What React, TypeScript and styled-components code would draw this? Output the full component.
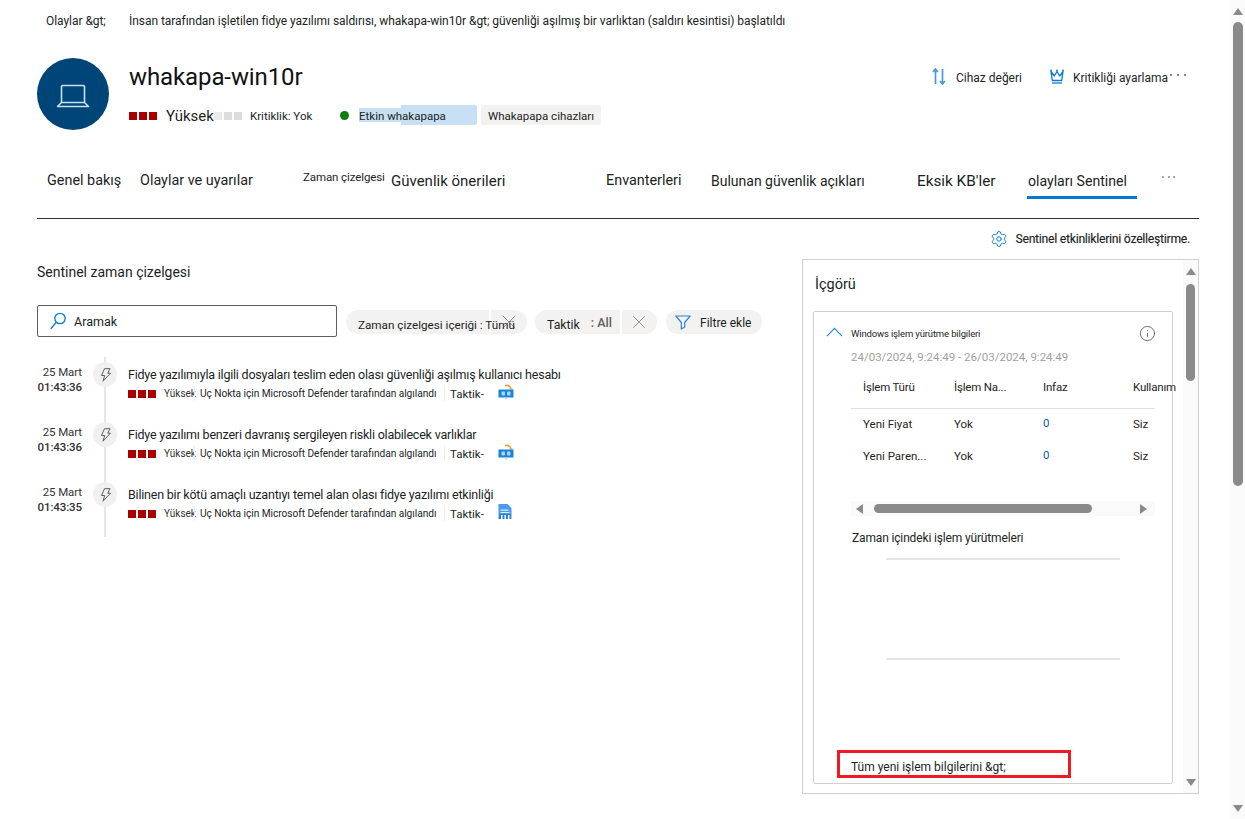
import React from "react";
import styled, { createGlobalStyle } from "styled-components";
import { Settings, X, Info } from "lucide-react";

const Global = createGlobalStyle`
  html, body { margin: 0; padding: 0; background: #fff; }
  * { box-sizing: border-box; }
  body { font-family: Roboto, "Liberation Sans", sans-serif; color: #201f1e; }
`;

const Page = styled.div`
  display: flex;
  width: 1245px;
  height: 819px;
  overflow: hidden;
  background: #fff;
`;
const Main = styled.main`
  width: 1230px;
  padding: 0 31px 0 37px;
  display: flex;
  flex-direction: column;
`;
const PageScroll = styled.div`
  width: 15px;
  background: #fafafa;
  display: flex;
  flex-direction: column;
  align-items: center;
  padding: 8px 0 7px 1px;
`;
const Arrow = styled.span<{ $dir: "up" | "down" | "left" | "right" }>`
  width: 0;
  height: 0;
  flex: none;
  ${(p) =>
    p.$dir === "up"
      ? "border-left:5px solid transparent;border-right:5px solid transparent;border-bottom:7px solid #8a8a8a;"
      : p.$dir === "down"
      ? "border-left:5px solid transparent;border-right:5px solid transparent;border-top:7px solid #8a8a8a;"
      : p.$dir === "left"
      ? "border-top:5px solid transparent;border-bottom:5px solid transparent;border-right:7px solid #8a8a8a;"
      : "border-top:5px solid transparent;border-bottom:5px solid transparent;border-left:7px solid #8a8a8a;"}
`;
const PageThumb = styled.div`
  width: 10px;
  height: 464px;
  margin-top: 7px;
  border-radius: 5px;
  background: #8a8a8a;
`;
const Spacer = styled.div`
  flex: 1;
`;

const Breadcrumb = styled.nav`
  height: 42px;
  display: flex;
  align-items: center;
  padding-left: 9px;
  font-size: 12px;
  letter-spacing: -0.05px;
`;
const Crumb = styled.span<{ $w?: number }>`
  width: ${(p) => (p.$w ? `${p.$w}px` : "auto")};
  white-space: nowrap;
`;

const Header = styled.header`
  margin-top: 16px;
  height: 72px;
  display: flex;
  gap: 20px;
`;
const Avatar = styled.div`
  width: 72px;
  height: 72px;
  padding-top: 3px;
  border-radius: 50%;
  background: #004578;
  display: flex;
  align-items: center;
  justify-content: center;
  flex: none;
`;
const HeaderInfo = styled.div`
  flex: 1;
  display: flex;
  flex-direction: column;
`;
const Title = styled.h1`
  margin: 4px 0 0;
  font-size: 24px;
  line-height: 30px;
  font-weight: 400;
  letter-spacing: -0.1px;
  color: #111;
`;
const MetaRow = styled.div`
  margin-top: 13px;
  height: 20px;
  display: flex;
  align-items: center;
`;
const Squares = styled.span<{ $down?: number }>`
  display: inline-flex;
  gap: 2px;
  flex: none;
  margin-top: ${(p) => p.$down ?? 0}px;
`;
const Square = styled.i<{ $c: string }>`
  display: block;
  width: 8px;
  height: 8px;
  background: ${(p) => p.$c};
`;
const Severity = styled.span`
  margin-left: 9px;
  padding-top: 2px;
  width: 48px;
  font-size: 15px;
  white-space: nowrap;
`;
const Critical = styled.span`
  margin-left: 8px;
  padding-top: 1px;
  width: 90px;
  font-size: 11.5px;
  white-space: nowrap;
`;
const Dot = styled.i`
  width: 9px;
  height: 9px;
  border-radius: 50%;
  background: #107c10;
  flex: none;
`;
const ActiveTag = styled.span`
  margin-left: 10px;
  padding-top: 1px;
  width: 118px;
  height: 20px;
  display: flex;
  align-items: center;
  font-size: 11.5px;
  white-space: nowrap;
  background: linear-gradient(#c7e0f4, #c7e0f4) right / 76px 20px no-repeat,
    linear-gradient(#c7e0f4, #c7e0f4) left center / 42px 14px no-repeat;
  border-radius: 2px;
`;
const DeviceTag = styled.span`
  margin-left: 4px;
  padding-top: 1px;
  width: 120px;
  height: 20px;
  display: flex;
  align-items: center;
  justify-content: center;
  font-size: 11.5px;
  background: #f3f2f1;
  border-radius: 2px;
`;
const Actions = styled.div`
  display: flex;
  align-items: flex-start;
  padding-top: 10px;
  margin-right: 13px;
`;
const Action = styled.span<{ $gap: number; $ml?: number }>`
  display: flex;
  align-items: center;
  gap: ${(p) => p.$gap}px;
  height: 20px;
  margin-left: ${(p) => p.$ml ?? 0}px;
  font-size: 12px;
  white-space: nowrap;
  svg {
    margin-top: -4px;
  }
`;
const Dots = styled.span<{ $gap: number; $ml: number; $mt: number; $c: string }>`
  margin-left: ${(p) => p.$ml}px;
  margin-top: ${(p) => p.$mt}px;
  height: 4px;
  display: flex;
  gap: ${(p) => p.$gap}px;
  align-items: flex-start;
  color: ${(p) => p.$c};
`;
const Dotlet = styled.i`
  width: 2px;
  height: 2px;
  border-radius: 50%;
  background: currentColor;
`;

const Tabs = styled.div`
  margin-top: 30px;
  height: 59px;
  display: flex;
  border-bottom: 1px solid #323130;
  padding-left: 10px;
`;
const Tab = styled.div<{ $w: number; $fs: number; $active?: boolean; $small?: boolean }>`
  position: relative;
  width: ${(p) => p.$w}px;
  flex: none;
  padding-top: ${(p) => (p.$small ? 9 : 12)}px;
  height: 39px;
  font-size: ${(p) => p.$fs}px;
  line-height: ${(p) => (p.$small ? "16px" : "18px")};
  white-space: nowrap;
  letter-spacing: ${(p) => (p.$small ? "-0.1px" : "0")};
  ${(p) =>
    p.$active &&
    `&::after{content:"";position:absolute;left:-1px;bottom:0;width:110px;height:3px;background:#0078d4;}`}
`;

const Customize = styled.div`
  height: 40px;
  display: flex;
  align-items: center;
  justify-content: flex-end;
  gap: 7px;
  padding-right: 9px;
  font-size: 12px;
  letter-spacing: -0.17px;
  white-space: nowrap;
  text-shadow: 0.5px 0.4px 0 rgba(32, 31, 30, 0.35);
`;

const Content = styled.div`
  display: flex;
  flex: 1;
  min-height: 0;
`;
const Left = styled.section`
  width: 765px;
  flex: none;
`;
const SectionTitle = styled.h2`
  margin: 4px 0 0;
  height: 18px;
  font-size: 14px;
  line-height: 18px;
  font-weight: 400;
  color: #201f1e;
`;
const FilterBar = styled.div`
  margin-top: 24px;
  display: flex;
  align-items: center;
  height: 32px;
`;
const Search = styled.div`
  width: 300px;
  height: 32px;
  border: 1px solid #605e5c;
  border-radius: 2px;
  display: flex;
  align-items: center;
  padding-left: 12px;
  gap: 8px;
  font-size: 12.5px;
  flex: none;
`;
const Chip = styled.div<{ $w: number; $ml: number }>`
  position: relative;
  width: ${(p) => p.$w}px;
  margin-left: ${(p) => p.$ml}px;
  height: 24px;
  margin-top: 2px;
  flex: none;
  border-radius: 12px;
  background: #f3f2f1;
  display: flex;
  align-items: center;
  font-size: 11.7px;
  white-space: nowrap;
`;
const ChipLabel = styled.span`
  position: relative;
  z-index: 1;
  margin-left: 12px;
  padding-top: 6px;
`;
const ChipValue = styled.b`
  margin-left: 11px;
  font-weight: 500;
  font-size: 12.5px;
  color: #605e5c;
`;
const TacticLabel = styled(ChipLabel)`
  font-size: 12.3px;
`;
const ChipClose = styled.span<{ $right: number; $top: number }>`
  position: absolute;
  right: ${(p) => p.$right}px;
  top: ${(p) => p.$top}px;
  display: flex;
  color: #8a8886;
`;
const ChipDivider = styled.i<{ $left: number }>`
  position: absolute;
  left: ${(p) => p.$left}px;
  top: 0;
  width: 2px;
  height: 24px;
  background: #fff;
`;
const AddFilter = styled.span`
  display: flex;
  align-items: center;
  gap: 9px;
  padding-left: 9px;
  font-size: 12px;
`;
const AddFilterLabel = styled.span`
  padding-top: 2px;
`;

const Timeline = styled.div`
  position: relative;
  margin-top: 20px;
  padding-top: 5px;
  height: 180px;
  &::before {
    content: "";
    position: absolute;
    left: 67px;
    top: 0;
    width: 2px;
    height: 180px;
    background: #e6e6e6;
  }
`;
const Item = styled.div`
  position: relative;
  height: 60px;
  display: flex;
`;
const When = styled.div`
  width: 45px;
  flex: none;
  text-align: right;
  font-size: 11.5px;
  line-height: 15px;
  letter-spacing: -0.1px;
  padding-top: 3px;
  color: #323130;
`;
const WhenTime = styled.div`
  font-weight: 500;
  font-size: 11.5px;
`;
const Bolt = styled.div`
  margin-left: 11px;
  width: 24px;
  height: 25px;
  flex: none;
  border-radius: 50%;
  background: #f0f0f0;
  display: flex;
  align-items: center;
  justify-content: center;
`;
const ItemBody = styled.div`
  margin-left: 11px;
  padding-top: 4px;
`;
const ItemTitle = styled.div`
  font-size: 12.5px;
  line-height: 18px;
  white-space: nowrap;
  letter-spacing: -0.21px;
`;
const ItemMeta = styled.div`
  margin-top: 2px;
  height: 15px;
  display: flex;
  align-items: center;
  svg {
    margin-top: -4px;
  }
`;
const MetaSev = styled.span`
  margin-left: 8px;
  width: 30px;
  font-size: 10px;
  color: #323130;
`;
const MetaSrc = styled.span`
  border-left: 1px solid #edebe9;
  border-right: 1px solid #edebe9;
  width: 251px;
  padding-left: 5px;
  font-size: 10.2px;
  line-height: 15px;
  letter-spacing: -0.06px;
  white-space: nowrap;
`;
const MetaTac = styled.span`
  margin-left: 5px;
  width: 48px;
  font-size: 11.5px;
  white-space: nowrap;
`;

const Panel = styled.aside`
  margin-left: 0;
  width: 397px;
  height: 535px;
  border: 1px solid #d0d0d0;
  display: flex;
`;
const PanelBody = styled.div`
  flex: none;
  width: 380px;
  padding: 0 10px 0 10px;
`;
const PanelTitle = styled.h3`
  margin: 15px 0 0 2px;
  font-size: 14.5px;
  line-height: 20px;
  font-weight: 400;
`;
const Card = styled.div`
  margin-top: 16px;
  width: 360px;
  height: 473px;
  border: 1px solid #d0d0d0;
  border-radius: 2px;
  padding: 0 16px 0 37px;
`;
const CardHead = styled.div`
  position: relative;
  height: 42px;
  display: flex;
  align-items: center;
  font-size: 9.5px;
  letter-spacing: -0.15px;
`;
const Chevron = styled.span`
  position: absolute;
  left: -25px;
  top: 15px;
  display: flex;
`;
const InfoIcon = styled.span`
  position: absolute;
  right: 0;
  top: 13px;
  display: flex;
`;
const DateRange = styled.div`
  font-size: 11.5px;
  line-height: 15px;
  margin-top: -4px;
  color: #a19f9d;
  white-space: nowrap;
`;
const Grid = styled.div`
  margin-top: 15px;
  width: 304px;
`;
const GridRow = styled.div<{ $head?: boolean }>`
  display: grid;
  grid-template-columns: 91px 89px 90px 60px;
  padding-left: 12px;
  padding-bottom: ${(p) => (p.$head ? 0 : 2)}px;
  height: ${(p) => (p.$head ? "29px" : "32px")};
  align-items: ${(p) => (p.$head ? "flex-start" : "center")};
  font-size: 11.5px;
  white-space: nowrap;
  color: #252423;
  ${(p) => p.$head && "border-bottom:1px solid #e1dfdd;letter-spacing:-0.2px;"}
`;
const Blue = styled.span`
  color: #0b5cad;
  margin-top: -2px;
`;
const HScroll = styled.div`
  margin-top: 28px;
  width: 304px;
  height: 15px;
  background: #fafafa;
  display: flex;
  align-items: center;
  padding: 0 8px 0 5px;
`;
const HThumb = styled.div`
  margin: 0 0 0 11px;
  width: 218px;
  height: 9px;
  border-radius: 5px;
  background: #8a8a8a;
`;
const ChartTitle = styled.div`
  margin-top: 14px;
  padding-left: 1px;
  font-size: 12px;
  line-height: 16px;
  letter-spacing: -0.15px;
  white-space: nowrap;
`;
const Chart = styled.div`
  margin: 12px 0 0 35px;
  width: 234px;
  height: 102px;
  border-top: 2px solid #e5e5e5;
  border-bottom: 2px solid #e5e5e5;
`;
const FootBox = styled.div`
  margin: 90px 0 0 -14px;
  width: 234px;
  height: 28px;
  border: 3px solid #ed1c24;
  display: flex;
  align-items: center;
  padding: 6px 0 0 11px;
  font-size: 12px;
  white-space: nowrap;
`;
const PanelScroll = styled.div`
  width: 15px;
  flex: none;
  background: #fafafa;
  display: flex;
  flex-direction: column;
  align-items: center;
  padding: 8px 0 7px;
`;
const PanelThumb = styled.div`
  margin-top: 9px;
  width: 9px;
  height: 97px;
  border-radius: 5px;
  background: #8a8a8a;
`;

const Laptop = () => (
  <svg width="36" height="26" viewBox="0 0 36 26" fill="none" stroke="#c7e0f4" strokeWidth="1.6">
    <path d="M6.500 19.500V3.700A1.200 1.200 0 0 1 7.700 2.500h20.600a1.200 1.200 0 0 1 1.200 1.200v15.800" />
    <path d="M6.500 19.500h23l4 4H2.500z" strokeLinejoin="round" />
  </svg>
);
const SortArrows = () => (
  <svg width="14" height="17" viewBox="0 0 14 17" fill="none" stroke="#4a9ad8" strokeWidth="1.700">
    <path d="M3.500 16V1.500M1 4l2.500-3L6 4" />
    <path d="M10.500 1v14.500M8 13l2.500 3 2.500-3" />
  </svg>
);
const Crown = () => (
  <svg width="14" height="15" viewBox="0 0 14 15" fill="none" stroke="#0a7ad1" strokeWidth="1.300">
    <path d="M1 2.500 2.300 11.500h9.400L13 2.500 9.700 7 7 2.500 4.300 7z" strokeLinejoin="round" />
    <path d="M2 14h10" />
    <circle cx="1" cy="1.500" r=".9" fill="#0a7ad1" stroke="none" />
    <circle cx="7" cy="1.500" r=".9" fill="#0a7ad1" stroke="none" />
    <circle cx="13" cy="1.500" r=".9" fill="#0a7ad1" stroke="none" />
  </svg>
);
const SearchIcon = () => (
  <svg width="16" height="18" viewBox="0 0 16 18" fill="none" stroke="#0078d4" strokeWidth="1.300">
    <circle cx="10" cy="6.500" r="5.200" />
    <path d="M6.200 10.300 1 16.500" strokeLinecap="round" />
  </svg>
);
const FilterIcon = () => (
  <svg width="16" height="15" viewBox="0 0 16 15" fill="none" stroke="#2b88d8" strokeWidth="1.200">
    <path d="M.8 1h14.400L9.700 7.500V12L6.300 14V7.500z" strokeLinejoin="round" />
  </svg>
);
const BoltIcon = () => (
  <svg width="11" height="14" viewBox="0 0 11 14" fill="none" stroke="#605e5c" strokeWidth="1">
    <path d="M4.500.7h5.500L7.700 5.200h2.800L3 13.200 4.700 7.500H1.500z" strokeLinejoin="round" />
  </svg>
);
const ChevronUp = () => (
  <svg width="17" height="10" viewBox="0 0 17 10" fill="none" stroke="#2b88d8" strokeWidth="1.200">
    <path d="M1 9.200 8.500 1.300 16 9.200" />
  </svg>
);
const NetIcon = () => (
  <svg width="16" height="16" viewBox="0 0 16 16">
    <path d="M7 1.800C9.500.9 12 2 13 4.500" fill="none" stroke="#ee9b3d" strokeWidth="1.500" />
    <path d="M11 4.200h4l-2 1.800z" fill="#ee9b3d" />
    <rect x="0.500" y="5.500" width="15" height="8" fill="#1a84dc" />
    <rect x="3.500" y="7.500" width="3.500" height="4" rx="1" fill="#a9d8f8" />
    <rect x="9" y="7.500" width="3.500" height="4" rx="1" fill="#a9d8f8" />
    <rect x="7" y="13.500" width="2" height="2" fill="#cfd8df" />
  </svg>
);
const FileIcon = () => (
  <svg width="14" height="15" viewBox="0 0 14 15">
    <path d="M.5 0h9L13.500 4v11H.5z" fill="#4c9be8" />
    <rect x="2.500" y="5.500" width="8" height="1.300" fill="#d8ecfb" />
    <rect x="2.500" y="8" width="9" height="1" fill="#d8ecfb" />
    <rect x="1" y="10" width="12" height="5" fill="#2a7fd6" />
    <rect x="3" y="11" width="1.500" height="4" fill="#fff" />
    <rect x="6.500" y="11" width="1.500" height="4" fill="#fff" />
    <rect x="10" y="11" width="1.500" height="4" fill="#fff" />
  </svg>
);

const sev = ["#a80000", "#a80000", "#a80000"];
const items = [
  { d: "01:43:36", t: "Fidye yazılımıyla ilgili dosyaları teslim eden olası güvenliği aşılmış kullanıcı hesabı", i: <NetIcon /> },
  { d: "01:43:36", t: "Fidye yazılımı benzeri davranış sergileyen riskli olabilecek varlıklar", i: <NetIcon /> },
  { d: "01:43:35", t: "Bilinen bir kötü amaçlı uzantıyı temel alan olası fidye yazılımı etkinliği", i: <FileIcon /> },
];
const tabs = [
  { l: "Genel bakış", w: 93, f: 14.4 },
  { l: "Olaylar ve uyarılar", w: 163, f: 14.4 },
  { l: "Zaman çizelgesi", w: 88, f: 11.5, s: true },
  { l: "Güvenlik önerileri", w: 215, f: 15 },
  { l: "Envanterleri", w: 105, f: 14.4 },
  { l: "Bulunan güvenlik açıkları", w: 206, f: 14 },
  { l: "Eksik KB'ler", w: 111, f: 15.3 },
  { l: "olayları Sentinel", w: 134, f: 14.1, a: true },
];

export default function App() {
  return (
    <Page>
      <Global />
      <Main>
        <Breadcrumb>
          <Crumb $w={83}>Olaylar &amp;gt;</Crumb>
          <Crumb>İnsan tarafından işletilen fidye yazılımı saldırısı, whakapa-win10r &amp;gt; güvenliği aşılmış bir varlıktan (saldırı kesintisi) başlatıldı</Crumb>
        </Breadcrumb>
        <Header>
          <Avatar>
            <Laptop />
          </Avatar>
          <HeaderInfo>
            <Title>whakapa-win10r</Title>
            <MetaRow>
              <Squares $down={2}>
                {sev.map((c, i) => (
                  <Square key={i} $c={c} />
                ))}
              </Squares>
              <Severity>Yüksek</Severity>
              <Squares $down={2}>
                {["#eaeaea", "#dcdcdc", "#dcdcdc"].map((c, i) => (
                  <Square key={i} $c={c} />
                ))}
              </Squares>
              <Critical>Kritiklik: Yok</Critical>
              <Dot />
              <ActiveTag>Etkin whakapapa</ActiveTag>
              <DeviceTag>Whakapapa cihazları</DeviceTag>
            </MetaRow>
          </HeaderInfo>
          <Actions>
            <Action $gap={10}>
              <SortArrows />
              Cihaz değeri
            </Action>
            <Action $gap={9} $ml={28}>
              <Crown />
              Kritikliği ayarlama
            </Action>
            <Dots $gap={5} $ml={2} $mt={6} $c="#605e5c">
              <Dotlet />
              <Dotlet />
              <Dotlet />
            </Dots>
          </Actions>
        </Header>
        <Tabs>
          {tabs.map((t) => (
            <Tab key={t.l} $w={t.w} $fs={t.f} $small={t.s} $active={t.a}>
              {t.l}
            </Tab>
          ))}
          <Tab $w={20} $fs={12} $small>
            <Dots $gap={3.5} $ml={0} $mt={7} $c="#8a8886">
              <Dotlet />
              <Dotlet />
              <Dotlet />
            </Dots>
          </Tab>
        </Tabs>
        <Customize>
          <Settings size={18} color="#0a7ad1" strokeWidth={1.3} />
          Sentinel etkinliklerini özelleştirme.
        </Customize>
        <Content>
          <Left>
            <SectionTitle>Sentinel zaman çizelgesi</SectionTitle>
            <FilterBar>
              <Search>
                <SearchIcon />
                Aramak
              </Search>
              <Chip $w={181} $ml={9}>
                <ChipDivider $left={143} />
                <ChipClose $right={6} $top={0}>
                  <X size={24} strokeWidth={0.9} />
                </ChipClose>
                <ChipLabel>Zaman çizelgesi içeriği : Tümü</ChipLabel>
              </Chip>
              <Chip $w={122} $ml={8}>
                <TacticLabel>Taktik</TacticLabel>
                <ChipValue>: All</ChipValue>
                <ChipDivider $left={85} />
                <ChipClose $right={7} $top={1}>
                  <X size={22} strokeWidth={1} />
                </ChipClose>
              </Chip>
              <Chip $w={96} $ml={9}>
                <AddFilter>
                  <FilterIcon />
                  <AddFilterLabel>Filtre ekle</AddFilterLabel>
                </AddFilter>
              </Chip>
            </FilterBar>
            <Timeline>
              {items.map((it) => (
                <Item key={it.t}>
                  <When>
                    25 Mart
                    <WhenTime>{it.d}</WhenTime>
                  </When>
                  <Bolt>
                    <BoltIcon />
                  </Bolt>
                  <ItemBody>
                    <ItemTitle>{it.t}</ItemTitle>
                    <ItemMeta>
                      <Squares>
                        {sev.map((c, i) => (
                          <Square key={i} $c={c} />
                        ))}
                      </Squares>
                      <MetaSev>Yüksek</MetaSev>
                      <MetaSrc>Uç Nokta için Microsoft Defender tarafından algılandı</MetaSrc>
                      <MetaTac>Taktik-</MetaTac>
                      {it.i}
                    </ItemMeta>
                  </ItemBody>
                </Item>
              ))}
            </Timeline>
          </Left>
          <Panel>
            <PanelBody>
              <PanelTitle>İçgörü</PanelTitle>
              <Card>
                <CardHead>
                  <Chevron>
                    <ChevronUp />
                  </Chevron>
                  Windows işlem yürütme bilgileri
                  <InfoIcon>
                    <Info size={17} strokeWidth={1} color="#323130" />
                  </InfoIcon>
                </CardHead>
                <DateRange>24/03/2024, 9:24:49 - 26/03/2024, 9:24:49</DateRange>
                <Grid>
                  <GridRow $head>
                    <span>İşlem Türü</span>
                    <span>İşlem Na...</span>
                    <span>Infaz</span>
                    <span>Kullanım</span>
                  </GridRow>
                  <GridRow>
                    <span>Yeni Fiyat</span>
                    <span>Yok</span>
                    <Blue>0</Blue>
                    <span>Siz</span>
                  </GridRow>
                  <GridRow>
                    <span>Yeni Paren...</span>
                    <span>Yok</span>
                    <Blue>0</Blue>
                    <span>Siz</span>
                  </GridRow>
                </Grid>
                <HScroll>
                  <Arrow $dir="left" />
                  <HThumb />
                  <Spacer />
                  <Arrow $dir="right" />
                </HScroll>
                <ChartTitle>Zaman içindeki işlem yürütmeleri</ChartTitle>
                <Chart />
                <FootBox>Tüm yeni işlem bilgilerini &amp;gt;</FootBox>
              </Card>
            </PanelBody>
            <PanelScroll>
              <Arrow $dir="up" />
              <PanelThumb />
              <Spacer />
              <Arrow $dir="down" />
            </PanelScroll>
          </Panel>
        </Content>
      </Main>
      <PageScroll>
        <Arrow $dir="up" />
        <PageThumb />
        <Spacer />
        <Arrow $dir="down" />
      </PageScroll>
    </Page>
  );
}
